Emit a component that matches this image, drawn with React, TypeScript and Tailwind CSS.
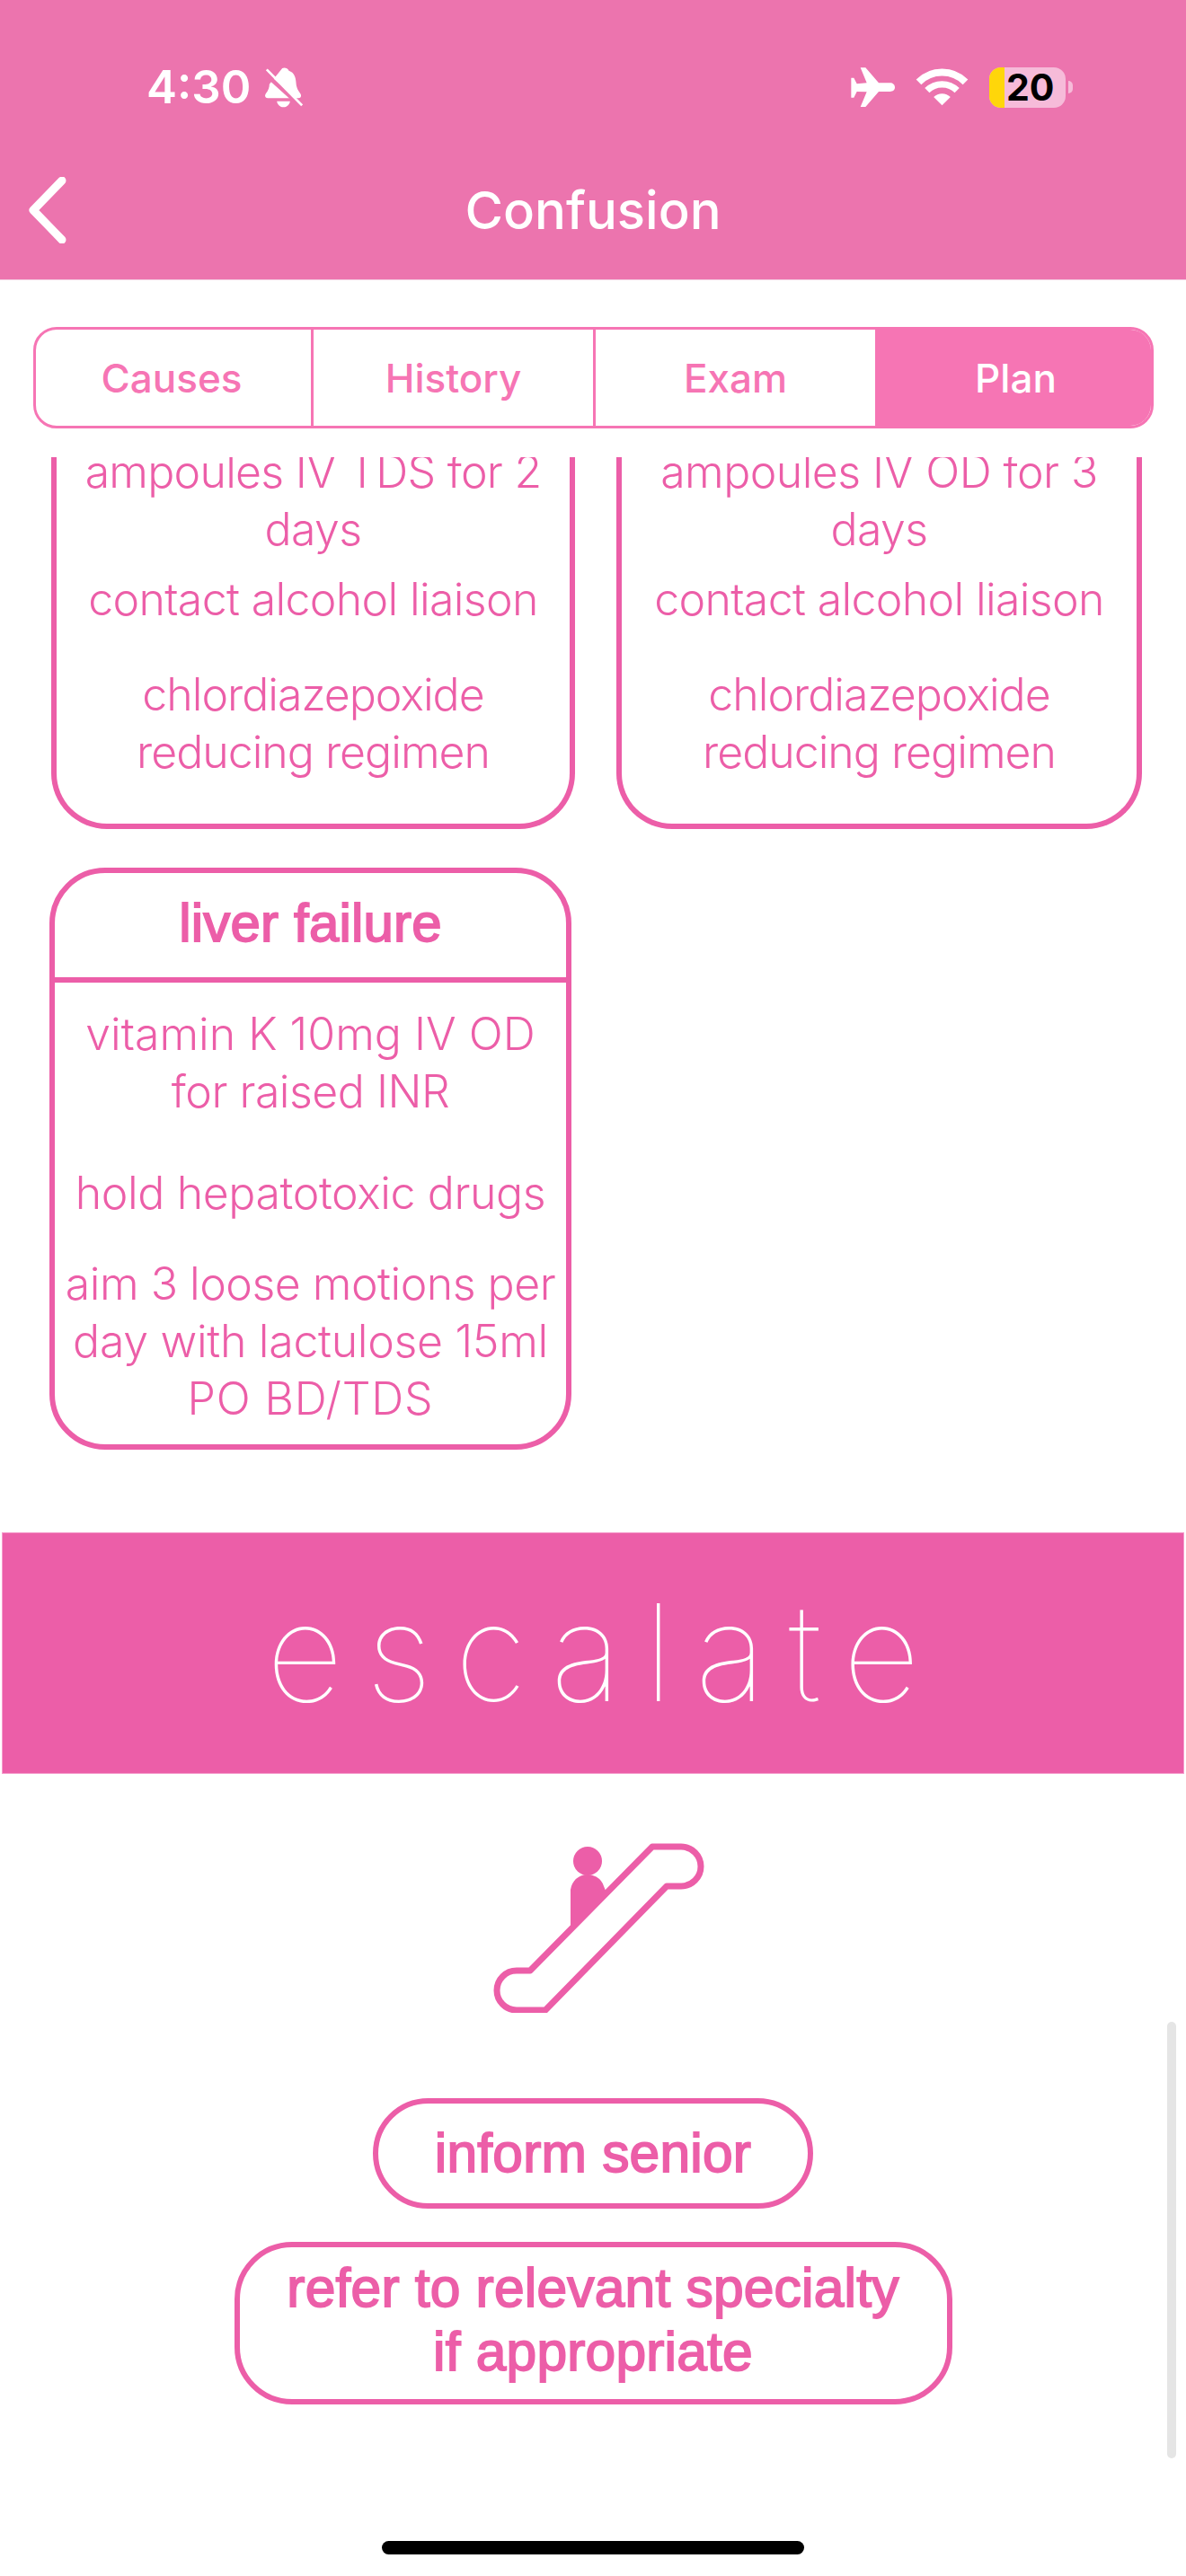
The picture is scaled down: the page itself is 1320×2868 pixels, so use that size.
import React from "react";

const body = "font-['Inter','Liberation_Sans',sans-serif]";
const pink = "text-[#ec5ea8]";

function Bell() {
  return (
    <svg viewBox="490 75 128 135" width="43" height="45" className="ml-[15px]">
      <path d="M550 78c8-4 18 0 22 8 18 6 23 22 24 40 1 14 4 22 14 36 5 7 3 16-6 16H502c-9 0-12-8-7-15 9-12 12-22 12-32z" fill="#fff" />
      <path d="M532 188h44c-2 12-11 20-22 20s-20-8-22-20z" fill="#fff" />
      <path d="M488 92l124 112" stroke="#ec74ae" strokeWidth="14" />
      <path d="M498 82l118 120" stroke="#fff" strokeWidth="8" />
    </svg>
  );
}

function Plane() {
  return (
    <svg viewBox="140 78 147 132" width="49" height="44">
      <path d="M172 79h17l44 51h38c9 0 16 6 16 15s-7 14-16 14h-38l-44 51h-17l21-50-33-1-10 20h-9v-66h9l10 20 33-3z" fill="#fff" />
    </svg>
  );
}

function Wifi() {
  return (
    <svg viewBox="358 76 176 126" width="59" height="42" fill="none">
      <path d="M368 122a110 110 0 0 1 156 0" stroke="#fff" strokeWidth="24" />
      <path d="M396 150a71 71 0 0 1 100 0" stroke="#fff" strokeWidth="22" />
      <path d="M418 172a40 40 0 0 1 56 0l-28 28z" fill="#fff" />
    </svg>
  );
}

function Battery() {
  return (
    <div className="flex items-center">
      <div className="flex h-[45px] w-[85px] overflow-hidden rounded-[13px] bg-[#f6bbd9]">
        <div className="h-full w-[17px] bg-[#ffd60a]" />
        <div className="flex-1 pl-[2px] text-[41px] leading-[45px] font-bold text-black font-['Inter','Liberation_Sans',sans-serif]">20</div>
      </div>
      <div className="ml-[3px] h-[14px] w-[5px] rounded-r-full bg-[#f6bbd9]" />
    </div>
  );
}

function Tab({ label, active, className }: { label: string; active?: boolean; className?: string }) {
  return (
    <div
      className={`flex h-full items-center justify-center text-[44px] font-medium ${
        active ? "bg-[#f675b4] text-white" : "text-[#f675b4]"
      } ${className ?? ""}`}
    >
      {label}
    </div>
  );
}

function AlcoholCard({ first, firstTracking, className }: { first: string; firstTracking: string; className: string }) {
  return (
    <div
      className={`-mt-[16px] h-[430px] rounded-b-[62px] border-x-[6px] border-b-[6px] border-[#ec5ea8] text-center text-[50px] leading-[64px] font-light ${pink} ${className}`}
    >
      <p className={firstTracking}>{first}</p>
      <p className="tracking-[-0.6px]">days</p>
      <p className="mt-[14px] tracking-[-0.65px]">contact alcohol liaison</p>
      <p className="mt-[42px] tracking-[-1px]">chlordiazepoxide</p>
      <p className="tracking-[-1px]">reducing regimen</p>
    </div>
  );
}

function Pill({ children, className }: { children: React.ReactNode; className: string }) {
  return (
    <div
      className={`flex items-center justify-center border-[6px] border-[#ec5ea8] text-center font-['Liberation_Sans',sans-serif] text-[60.5px] leading-[71px] tracking-[0.2px] [-webkit-text-stroke:1.8px_#ec5ea8] ${pink} ${className}`}
    >
      {children}
    </div>
  );
}

export default function App() {
  return (
    <div className={`relative flex h-[2868px] w-[1320px] flex-col overflow-hidden bg-white ${body}`}>
      <header className="flex h-[312px] flex-col border-b border-[#f3cfe2] bg-[#ec74ae] text-white">
        <div className="mt-[74px] flex h-[46px] items-center pl-[163px]">
          <span className="text-[51px] leading-[46px] font-semibold">4:30</span>
          <Bell />
          <div className="ml-auto mr-[126px] flex items-center gap-[23px]">
            <Plane />
            <Wifi />
            <Battery />
          </div>
        </div>
        <div className="relative mt-[77px] flex h-[74px] items-center justify-center">
          <svg viewBox="0 0 42 74" width="42" height="74" fill="none" className="absolute left-[32px] top-0">
            <path d="M37 4L5 37l32 33" stroke="#fff" strokeWidth="9" strokeLinecap="round" strokeLinejoin="round" />
          </svg>
          <span className="text-[58px] leading-[74px] font-medium">Confusion</span>
        </div>
      </header>

      <div className="ml-[37px] mt-[52px] flex h-[113px] w-[1247px] overflow-hidden rounded-[26px] border-[3px] border-[#f675b4]">
        <div className="w-[309px] border-r-[3px] border-[#f675b4]"><Tab label="Causes" className="pr-[4px]" /></div>
        <div className="w-[314px] border-r-[3px] border-[#f675b4]"><Tab label="History" /></div>
        <div className="w-[311px]"><Tab label="Exam" /></div>
        <div className="flex-1"><Tab label="Plan" active className="pl-[6px]" /></div>
      </div>

      <main className="mt-[32px] flex min-h-0 flex-1 flex-col overflow-hidden">
        <div className="flex h-[414px] pl-[57px]">
          <AlcoholCard first="ampoules IV TDS for 2" firstTracking="tracking-[-0.75px]" className="w-[583px]" />
          <AlcoholCard first="ampoules IV OD for 3" firstTracking="tracking-[-0.55px]" className="ml-[46px] w-[585px]" />
        </div>

        <div className={`ml-[55px] mt-[43px] h-[648px] w-[581px] rounded-[62px] border-[6px] border-[#ec5ea8] text-center ${pink}`}>
          <div className="flex h-[122px] items-center justify-center border-b-[6px] border-[#ec5ea8] pb-[5px] font-['Liberation_Sans',sans-serif] text-[60px] tracking-[0.2px] [-webkit-text-stroke:1.8px_#ec5ea8]">
            liver failure
          </div>
          <div className="pt-[25px] text-[50px] leading-[64px] font-light">
            <p className="tracking-[0px]">vitamin K 10mg IV OD</p>
            <p className="tracking-[-0.5px]">for raised INR</p>
            <p className="mt-[49px] tracking-[-0.4px]">hold hepatotoxic drugs</p>
            <p className="mt-[37px] tracking-[-0.5px]">aim 3 loose motions per</p>
            <p className="tracking-[-0.3px]">day with lactulose 15ml</p>
            <p className="tracking-[0.8px]">PO BD/TDS</p>
          </div>
        </div>

        <div className="ml-[2px] mt-[92px] flex h-[269px] w-[1316px] items-center justify-center border border-[#f59ccb] bg-[#ec5ea8] pb-[2px] pl-[25px] text-[150px] leading-none font-thin tracking-[25px] text-white">
          escalate
        </div>

        <svg viewBox="0 0 240 190" width="240" height="190" fill="none" className="ml-[547px] mt-[76px]">
          <path
            d="M183 5h32a22 22 0 0 1 0 44h-16L64 187H32a22 22 0 0 1 0-44h15z"
            stroke="#ec5ea8"
            strokeWidth="7"
            strokeLinejoin="round"
            transform="translate(-4 0)"
          />
          <circle cx="107" cy="21" r="16" fill="#ec5ea8" />
          <path d="M88 100V56a19 19 0 0 1 37-7l2 5z" fill="#ec5ea8" />
        </svg>

        <div className="mt-[95px] flex flex-col items-center">
          <Pill className="h-[123px] w-[490px] rounded-full">inform senior</Pill>
          <Pill className="mt-[37px] h-[181px] w-[799px] rounded-[64px] pb-[7px]">
            <span>
              refer to relevant specialty
              <br />
              if appropriate
            </span>
          </Pill>
        </div>
      </main>

      <div className="absolute left-[1299px] top-[2251px] h-[486px] w-[10px] rounded-full bg-[#e5e5e5]" />
      <div className="absolute left-[425px] top-[2829px] h-[15px] w-[470px] rounded-full bg-black" />
    </div>
  );
}
